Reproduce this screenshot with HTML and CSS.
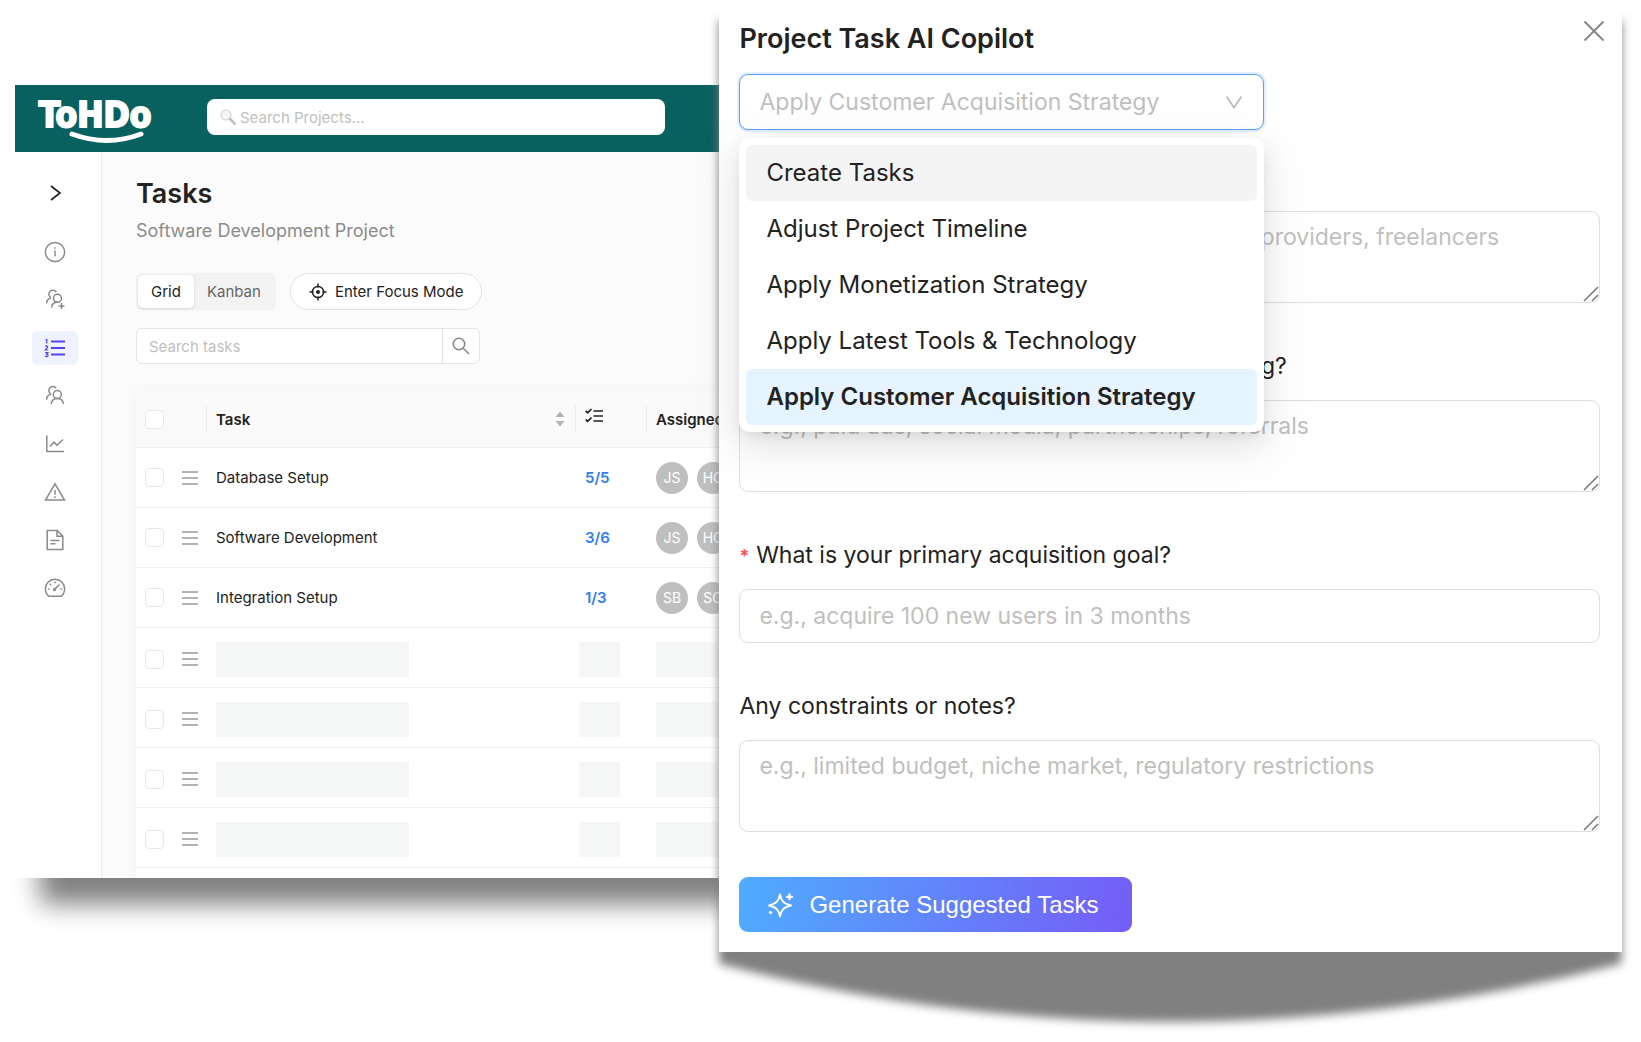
FILE: index.html
```html
<!DOCTYPE html>
<html lang="en">
<head>
  <meta charset="UTF-8" />
  <meta name="viewport" content="width=device-width, initial-scale=1" />
  <title>ToHDo - Tasks</title>
  <link rel="stylesheet" href="styles.css">
</head>
<body>
  <div class="stage">
    <!-- Task board -->
    <div class="app">
      <header class="topbar">
        <a href="#" class="logo" aria-label="ToHDo">
          <svg width="118" height="56" viewBox="0 0 118 56">
            <text class="logo-text" x="57" y="38" text-anchor="middle">ToHDo</text>
            <path d="M34 45 Q69 58 103 45" fill="none" stroke="#fff" stroke-width="5" stroke-linecap="round" />
          </svg>
        </a>
        <label class="project-search">
          <svg width="16" height="16" viewBox="0 0 16 16" fill="none">
            <circle cx="6" cy="6" r="5" fill="#f4f7f8" stroke="#dcdcdc" stroke-width="1.4" />
            <path d="M10 10l5 5" stroke="#c4c0bd" stroke-width="2.6" stroke-linecap="round" />
          </svg>
          <input type="text" placeholder="Search Projects..." aria-label="Search Projects" />
        </label>
      </header>

      <div class="body">
        <nav class="sidebar" aria-label="Project">
          <button class="expand" aria-label="Expand menu">
            <svg width="20" height="20" viewBox="0 0 20 20"><path d="M6 3l9 7-9 7" /></svg>
          </button>
          <a href="#" class="nav-item" aria-label="Info">
            <svg width="22" height="22" viewBox="0 0 22 22"><circle cx="11" cy="11" r="9.6" /><path d="M11 9.6v5.6M11 6.2v1.6" /></svg>
          </a>
          <a href="#" class="nav-item" aria-label="Add members">
            <svg width="22" height="22" viewBox="0 0 22 22"><circle cx="13.5" cy="9.3" r="4" /><path d="M7.5 18.5c.3-3 2.600-5.200 6-5.200M12.300 3.200A4 4 0 1 0 7 8.800M7 8.800c-2.600.8-4.300 2.800-4.500 5.700M17.500 14v6M14.500 17h6" /></svg>
          </a>
          <a href="#" class="nav-item active" aria-label="Tasks">
            <svg width="22" height="22" viewBox="0 0 22 22"><path d="M7 4.500h14M7 11h14M7 17.500h14" /><path class="thin" d="M1.500 3.200l1.300-.7v4M1.200 9.500c1.500-1.200 3-.2 2.200 1L1.300 13h2.900M1.200 15.600h2.700l-1.300 1.500c2 .1 1.900 2.500.1 2.500-.8 0-1.400-.3-1.600-.8" /></svg>
          </a>
          <a href="#" class="nav-item" aria-label="Team">
            <svg width="22" height="22" viewBox="0 0 22 22"><circle cx="13.300" cy="9.600" r="4" /><path d="M7.200 19c.4-3.200 2.800-5.400 6.100-5.400s5.800 2.200 6.200 5.400M12.300 3.400A4 4 0 1 0 7 9M7 9c-2.600.8-4.300 2.800-4.500 5.700" /></svg>
          </a>
          <a href="#" class="nav-item" aria-label="Reports">
            <svg width="22" height="22" viewBox="0 0 22 22"><path d="M2.800 2.500v16H20M6 13.500l4-4.300 3 3L19 6.500" /></svg>
          </a>
          <a href="#" class="nav-item" aria-label="Risks">
            <svg width="22" height="22" viewBox="0 0 22 22"><path d="M11 2.800L20.500 19h-19zM11 9v4.800M11 15.300v1.600" /></svg>
          </a>
          <a href="#" class="nav-item" aria-label="Documents">
            <svg width="22" height="22" viewBox="0 0 22 22"><path d="M3.200 1.500h10L18.800 7v13.500H3.200zM13 1.500V7.200h5.800M6.500 11.500h9M6.500 14.700h5" /></svg>
          </a>
          <a href="#" class="nav-item" aria-label="Dashboard">
            <svg width="22" height="22" viewBox="0 0 22 22"><path d="M4.700 19.200C2.500 17.400 1.400 14.500 1.400 11.800a9.600 9.600 0 0 1 19.200 0c0 2.700-1.100 5.600-3.300 7.400zM11 4.500v1.700M3.800 12h1.700M16.500 12h1.700M5.900 6.900l1.200 1.200M10.600 12.400L15.500 7.500" /><circle cx="10.600" cy="12.400" r="1" /></svg>
          </a>
        </nav>

        <main class="content">
          <h1>Tasks</h1>
          <p class="subtitle">Software Development Project</p>

          <div class="toolbar">
            <div class="segmented">
              <button class="segment selected">Grid</button>
              <button class="segment">Kanban</button>
            </div>
            <button class="focus-btn">
              <svg width="18" height="18" viewBox="0 0 18 18" fill="none" stroke="#222" stroke-width="1.500"><circle cx="9" cy="9" r="5.600" /><circle cx="9" cy="9" r="2" fill="#222" stroke="none" /><path d="M9 .5v4M9 13.500v4M.5 9h4M13.500 9h4" /></svg>
              Enter Focus Mode
            </button>
          </div>

          <div class="task-search">
            <input type="text" placeholder="Search tasks" aria-label="Search tasks" />
            <button aria-label="Search">
              <svg width="18" height="18" viewBox="0 0 18 18" fill="none" stroke="#888" stroke-width="1.600"><circle cx="7" cy="7" r="5.700" /><path d="M11 11l6 6" /></svg>
            </button>
          </div>

          <table class="tasks">
            <colgroup>
              <col class="col-pick" /><col class="col-task" /><col class="col-count" /><col />
            </colgroup>
            <thead>
              <tr>
                <th><input type="checkbox" aria-label="Select all" /></th>
                <th>
                  <div class="sortable">Task
                    <svg width="10" height="16" viewBox="0 0 10 16" fill="#b5b5b5"><path d="M5 .5l4.600 5.500H.4zM5 15.500L.4 10h9.200z" /></svg>
                  </div>
                </th>
                <th>
                  <svg class="checklist" width="18" height="16" viewBox="0 0 18 16" fill="none" stroke="#222" stroke-width="1.700"><path d="M8.500 3H18M8.500 8H18M8.500 13H18M.7 3l2 1.800L6.500 1M.7 11.500l2 1.800 3.800-3.800" /></svg>
                </th>
                <th>Assigned</th>
              </tr>
            </thead>
            <tbody id="taskRows">
              <!-- rows are filled in below -->
            </tbody>
          </table>
        </main>
      </div>
    </div>

    <!-- AI copilot drawer -->
    <div class="copilot-wrap">
      <svg class="copilot-shadow" viewBox="0 0 100 100" preserveAspectRatio="none" aria-hidden="true">
        <path d="M0 2H100V94.200Q50 105.600 0 94.200z" fill="#808080" />
      </svg>
      <section class="copilot">
        <div class="copilot-head">
          <h2>Project Task AI Copilot</h2>
          <button class="close" aria-label="Close">
            <svg width="22" height="22" viewBox="0 0 22 22"><path d="M1.500 1.500l19 19M20.500 1.500l-19 19" stroke="#888" stroke-width="2" /></svg>
          </button>
        </div>

        <div class="strategy">
          <select aria-label="Copilot action">
            <option>Apply Customer Acquisition Strategy</option>
          </select>
          <svg class="arrow" width="18" height="14" viewBox="0 0 18 14" fill="none"><path d="M1.500 1.500L9 12.500l7.500-11" stroke="#b8b8b8" stroke-width="1.600" /></svg>
          <ul class="menu" role="listbox" aria-label="Copilot actions">
            <li role="option" class="hovered">Create Tasks</li>
            <li role="option">Adjust Project Timeline</li>
            <li role="option">Apply Monetization Strategy</li>
            <li role="option">Apply Latest Tools &amp; Technology</li>
            <li role="option" class="picked" aria-selected="true">Apply Customer Acquisition Strategy</li>
          </ul>
        </div>

        <form class="questions">
          <div class="field">
            <div class="area">
              <textarea aria-label="Target audience" placeholder="e.g., small business owners, startups, service providers, freelancers"></textarea>
              <svg class="grip" width="16" height="16" viewBox="0 0 16 16"><path d="M1 15L15 1M9 15l6-6" /></svg>
            </div>
          </div>
          <div class="field">
            <label for="channels" class="required">Which acquisition channels are you considering?</label>
            <div class="area">
              <textarea id="channels" placeholder="e.g., paid ads, social media, partnerships, referrals"></textarea>
              <svg class="grip" width="16" height="16" viewBox="0 0 16 16"><path d="M1 15L15 1M9 15l6-6" /></svg>
            </div>
          </div>
          <div class="field">
            <label for="goal" class="required">What is your primary acquisition goal?</label>
            <input type="text" id="goal" placeholder="e.g., acquire 100 new users in 3 months" />
          </div>
          <div class="field">
            <label for="notes">Any constraints or notes?</label>
            <div class="area">
              <textarea id="notes" placeholder="e.g., limited budget, niche market, regulatory restrictions"></textarea>
              <svg class="grip" width="16" height="16" viewBox="0 0 16 16"><path d="M1 15L15 1M9 15l6-6" /></svg>
            </div>
          </div>
          <button type="button" class="generate">
            <svg width="28" height="28" viewBox="0 0 28 28" fill="none" stroke="#fff" stroke-width="1.900" stroke-linejoin="round" stroke-linecap="round"><path d="M13 3.500c1.200 6.500 3.300 9 11 11-7.700 2-9.800 4.500-11 11-1.200-6.500-3.300-9-11-11 7.700-2 9.800-4.500 11-11z" /><path d="M22.500 3.300v5M20 5.800h5" stroke-width="2.200" /><circle cx="3.500" cy="21.500" r="1.200" fill="#fff" stroke-width="1" /></svg>
            Generate Suggested Tasks
          </button>
        </form>
      </section>
    </div>
  </div>

  <script>
  const tasks = [
    { name: "Database Setup", count: "5/5", people: ["JS", "HC"] },
    { name: "Software Development", count: "3/6", people: ["JS", "HC"] },
    { name: "Integration Setup", count: "1/3", people: ["SB", "SG"] },
    null, null, null, null, null
  ];

  const handle = `<svg class="handle" width="16" height="14" viewBox="0 0 16 14"><path d="M0 1h16M0 7h16M0 13h16" /></svg>`;
  const bar = (size) => `<span class="skeleton ${size}"></span>`;

  tasks.forEach((task, i) => {
    const row = document.createElement("tr");
    const pick = `<td><div class="pick"><input type="checkbox" aria-label="Select row ${i + 1}" />${handle}</div></td>`;
    if (task) {
      const people = task.people.map((p) => `<span class="avatar">${p}</span>`).join("");
      row.innerHTML = `${pick}
        <td>${task.name}</td>
        <td><a href="#">${task.count}</a></td>
        <td><div class="people">${people}</div></td>`;
    } else {
      row.className = "loading";
      row.innerHTML = `${pick}<td>${bar("wide")}</td><td>${bar("small")}</td><td>${bar("wide")}</td>`;
    }
    document.getElementById("taskRows").appendChild(row);
  });
  </script>
</body>
</html>
```

FILE: styles.css
```css
/* Reset and base */
* {
  box-sizing: border-box;
}
body {
  margin: 0;
  background: #fff;
  color: #222;
  font-family: Inter, "Liberation Sans", sans-serif;
  font-size: 15px;
}
h1, h2, p, ul {
  margin: 0;
  padding: 0;
}
button, input, select, textarea {
  font: inherit;
  color: inherit;
}
button {
  padding: 0;
  border: none;
  background: none;
  cursor: pointer;
}
input::placeholder, textarea::placeholder {
  color: #bfbfbf;
  opacity: 1;
}
a {
  text-decoration: none;
}
svg {
  display: block;
  flex: none;
}

.stage {
  display: grid;
  grid-template-columns: 704fr 902fr;
  align-items: start;
  min-height: 100vh;
  padding: 0 19px 80px 15px;
}

/* Task board */
.app {
  display: flex;
  flex-direction: column;
  min-width: 0;
  height: 793px;
  margin-top: 85px;
  background: #fff;
  box-shadow: 25px 26px 24px #808080;
}
.topbar {
  display: flex;
  align-items: center;
  gap: 51px;
  flex: none;
  height: 67px;
  padding: 0 54px 3px 23px;
  background: #08605f;
}
.logo svg {
  overflow: visible;
}
.logo-text {
  font-family: "DejaVu Sans Condensed", "DejaVu Sans", sans-serif;
  font-size: 35px;
  font-weight: 700;
  fill: #fff;
  stroke: #fff;
  stroke-width: 2px;
  stroke-linejoin: round;
}
.project-search {
  display: flex;
  align-items: center;
  gap: 4px;
  flex: 1;
  min-width: 0;
  height: 36px;
  padding: 0 13px;
  background: #fff;
  border-radius: 8px;
}
.project-search input {
  flex: 1;
  min-width: 0;
  padding: 0;
  border: none;
  outline: none;
}

.body {
  display: flex;
  flex: 1;
  min-height: 0;
}
.sidebar {
  display: flex;
  flex-direction: column;
  align-items: center;
  gap: 14px;
  flex: none;
  width: 87px;
  padding: 24px 6px 0 0;
  border-right: 1px solid #ececec;
}
.sidebar svg {
  fill: none;
  stroke: #8a8a8a;
  stroke-width: 1.5;
}
.expand {
  display: flex;
  align-items: center;
  height: 34px;
  margin-bottom: 11px;
}
.sidebar .expand svg {
  stroke: #222;
  stroke-width: 1.7;
}
.nav-item {
  display: flex;
  align-items: center;
  justify-content: center;
  width: 46px;
  height: 34px;
  border-radius: 6px;
}
.nav-item.active {
  background: #eef3ff;
}
.sidebar .active svg {
  stroke: #5346e8;
  stroke-width: 1.8;
}
.sidebar .active .thin {
  stroke-width: 1.2;
}

.content {
  flex: 1;
  min-width: 0;
  overflow: hidden;
  padding: 25px 0 0 34px;
  background: #fbfbfb;
}
h1 {
  font-size: 27px;
  line-height: 34px;
  font-weight: 600;
}
.subtitle {
  margin-top: 7px;
  color: #8c8c8c;
  font-size: 18px;
  line-height: 26px;
}
.toolbar {
  display: flex;
  gap: 14px;
  margin-top: 29px;
}
.segmented {
  display: flex;
  padding: 2px;
  background: #f3f3f3;
  border-radius: 6px;
}
.segment {
  padding: 0 13px;
  border-radius: 5px;
  color: #666;
}
.segment.selected {
  background: #fff;
  color: #222;
  box-shadow: 0 1px 3px rgba(0, 0, 0, 0.12);
}
.focus-btn {
  display: flex;
  align-items: center;
  gap: 8px;
  height: 37px;
  padding: 0 18px;
  background: #fff;
  border: 1px solid #e4e4e4;
  border-radius: 19px;
}
.task-search {
  display: flex;
  width: 344px;
  height: 36px;
  margin-top: 18px;
  background: #fff;
  border: 1px solid #e4e4e4;
  border-radius: 6px;
}
.task-search input {
  flex: 1;
  min-width: 0;
  padding: 0 12px;
  border: none;
  outline: none;
  background: none;
}
.task-search button {
  display: flex;
  align-items: center;
  justify-content: center;
  width: 37px;
  border-left: 1px solid #e4e4e4;
}

/* Table */
.tasks {
  width: 100%;
  margin-top: 27px;
  table-layout: fixed;
  border-collapse: separate;
  border-spacing: 0;
  background: #fff;
  box-shadow: 0 0 14px rgba(0, 0, 0, 0.04);
}
.col-pick {
  width: 70px;
}
.col-task {
  width: 369px;
}
.col-count {
  width: 71px;
}
.tasks th {
  height: 57px;
  padding: 0 10px;
  background: #fafafa;
  border-bottom: 1px solid #f2f2f2;
  font-weight: 600;
  text-align: left;
}
.tasks th + th {
  background: linear-gradient(#ececec, #ececec) 0 50% / 1px 26px no-repeat #fafafa;
}
.tasks td {
  height: 60px;
  padding: 0 10px;
  border-bottom: 1px solid #f2f2f2;
  white-space: nowrap;
}
.tasks th:first-child, .tasks td:first-child {
  padding: 0 9px;
}
.tasks td a {
  color: #2f7cf6;
  font-size: 15px;
  font-weight: 600;
}
.tasks input[type="checkbox"] {
  display: block;
  appearance: none;
  flex: none;
  width: 19px;
  height: 19px;
  margin: 0;
  background: #fff;
  border: 1px solid #e8e8e8;
  border-radius: 4px;
}
.sortable {
  display: flex;
  align-items: center;
  justify-content: space-between;
}
.checklist {
  margin-bottom: 6px;
}
.pick {
  display: flex;
  align-items: center;
  gap: 18px;
}
.handle {
  stroke: #9a9a9a;
  stroke-width: 1.4;
}
.people {
  display: flex;
  gap: 9px;
}
.avatar {
  display: flex;
  align-items: center;
  justify-content: center;
  flex: none;
  width: 32px;
  height: 32px;
  background: #bfbfbf;
  border-radius: 50%;
  color: #fff;
  font-size: 14px;
}
.skeleton {
  display: block;
  height: 35px;
  background: #f5f7f6;
}
.skeleton.wide {
  width: 193px;
}
.skeleton.small {
  width: 41px;
}
.tasks .loading td {
  padding-top: 3px;
}
.tasks .loading td:nth-child(3) {
  padding-left: 4px;
}

/* AI copilot drawer */
.copilot-wrap {
  position: relative;
  z-index: 1;
}
.copilot-shadow {
  position: absolute;
  top: 0;
  left: 0;
  z-index: -1;
  width: 100%;
  height: calc(100% + 71px);
  overflow: visible;
  filter: blur(5px);
}
.copilot {
  padding: 20px 22px 20px 20px;
  background: #fff;
  font-size: 23px;
}
.copilot-head {
  display: flex;
  align-items: flex-start;
  justify-content: space-between;
}
.copilot h2 {
  font-size: 27px;
  line-height: 38px;
  font-weight: 600;
}
.close {
  margin-right: -5px;
}
.strategy {
  position: relative;
  width: 61%;
  margin-top: 16px;
}
.strategy select {
  display: block;
  appearance: none;
  width: 100%;
  height: 56px;
  padding: 0 19px;
  background: #fff;
  border: 1px solid #5d9df8;
  border-radius: 9px;
  outline: none;
  color: #bfbfbf;
  box-shadow: 0 0 0 2px rgba(22, 119, 255, 0.12);
}
.arrow {
  position: absolute;
  top: 21px;
  right: 21px;
}
.menu {
  position: absolute;
  top: 64px;
  left: 0;
  z-index: 2;
  width: 100%;
  padding: 7px;
  list-style: none;
  background: #fff;
  border-radius: 10px;
  font-size: 24px;
  box-shadow: 0 10px 28px rgba(0, 0, 0, 0.08), 0 5px 14px -6px rgba(0, 0, 0, 0.12), 0 14px 48px 12px rgba(0, 0, 0, 0.05);
}
.menu li {
  padding: 0 20px;
  border-radius: 6px;
  line-height: 56px;
  white-space: nowrap;
}
.menu .hovered {
  background: #f4f4f4;
}
.menu .picked {
  background: #e6f4ff;
  font-weight: 600;
}

.questions {
  margin-top: 81px;
}
.field {
  margin-bottom: 45px;
}
.field label {
  display: block;
  margin-bottom: 16px;
  line-height: 36px;
}
.required::before {
  content: "*";
  margin-right: 7px;
  color: #ff4d4f;
  font-size: 18px;
  font-weight: 600;
  line-height: 1;
}
.field input, .field textarea {
  display: block;
  width: 100%;
  padding: 0 19px;
  background: transparent;
  border: 1px solid #dedede;
  border-radius: 9px;
  outline: none;
}
.field input {
  height: 54px;
}
.field textarea {
  height: 92px;
  padding-top: 7px;
  line-height: 36px;
  resize: none;
}
.area {
  position: relative;
}
.grip {
  position: absolute;
  right: 1px;
  bottom: 1px;
  stroke: #777;
  stroke-width: 1.5;
}
.generate {
  display: flex;
  align-items: center;
  gap: 14px;
  height: 55px;
  padding: 0 33px 0 28px;
  background: linear-gradient(100deg, #4facfe, #755df7);
  border-radius: 9px;
  color: #fff;
  font-family: "Liberation Sans", Arial, sans-serif;
  font-size: 24px;
}
```
